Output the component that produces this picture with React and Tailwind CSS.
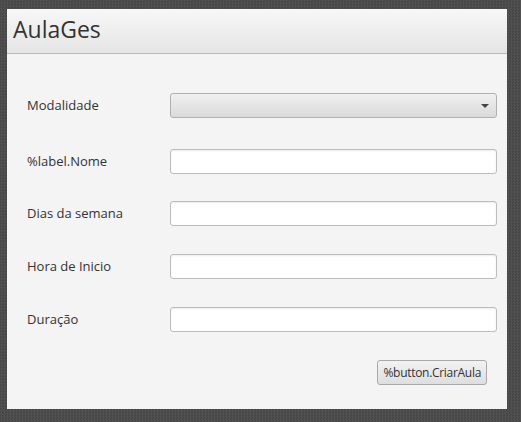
const fields = [
  { label: "%label.Nome", mt: "mt-[31px]" },
  { label: "Dias da semana", mt: "mt-[27px]" },
  { label: "Hora de Inicio", mt: "mt-[28px]" },
  { label: "Duração", mt: "mt-[28px]" },
];

function TextField() {
  return (
    <div className="w-[327px] h-[25px] rounded-[3px] border border-[#bcbcbc] bg-white shadow-[inset_0_1px_2px_rgba(0,0,0,0.08)]" />
  );
}

export default function App() {
  return (
    <div
      className="w-[521px] h-[422px] pt-[9px] pl-[7px] bg-[#4a4a4a] bg-[repeating-conic-gradient(#515151_0_25%,#464646_0_50%)] bg-[length:3px_3px]"
      style={{ fontFamily: '"Open Sans", "Noto Sans", sans-serif' }}
    >
      <div className="w-[500px] h-[400px] bg-[#f4f4f4] flex flex-col">
        {/* Header */}
        <div className="h-[45px] bg-gradient-to-b from-[#f7f7f7] to-[#e5e5e5] border-b border-[#b8b8b8] flex items-center pl-[6px] pb-[3px]">
          <h1 className="text-[23px] text-[#333333] leading-none">AulaGes</h1>
        </div>

        <div className="flex flex-col pl-[20px]">
          {/* Modalidade */}
          <div className="mt-[39px] flex items-center h-[25px]">
            <span className="w-[143px] text-[13px] text-[#333333]">Modalidade</span>
            <div className="w-[327px] h-[25px] rounded-[3px] border border-[#b0b0b0] bg-gradient-to-b from-[#f0f0f0] to-[#dadada] flex items-center justify-end pr-[7px]">
              <div className="w-0 h-0 border-l-[4px] border-r-[4px] border-t-[4px] border-l-transparent border-r-transparent border-t-[#444444]" />
            </div>
          </div>

          {fields.map((f) => (
            <div key={f.label} className={`${f.mt} flex items-center h-[25px]`}>
              <span className="w-[143px] text-[13px] text-[#333333]">{f.label}</span>
              <TextField />
            </div>
          ))}

          {/* Button */}
          <div className="mt-[28px] flex justify-end pr-[20px]">
            <button className="h-[25px] px-[5px] rounded-[3px] border border-[#a9a9a9] bg-gradient-to-b from-[#f3f3f3] to-[#dedede] text-[12px] tracking-[-0.3px] text-[#333333]">
              %button.CriarAula
            </button>
          </div>
        </div>
      </div>
    </div>
  );
}
